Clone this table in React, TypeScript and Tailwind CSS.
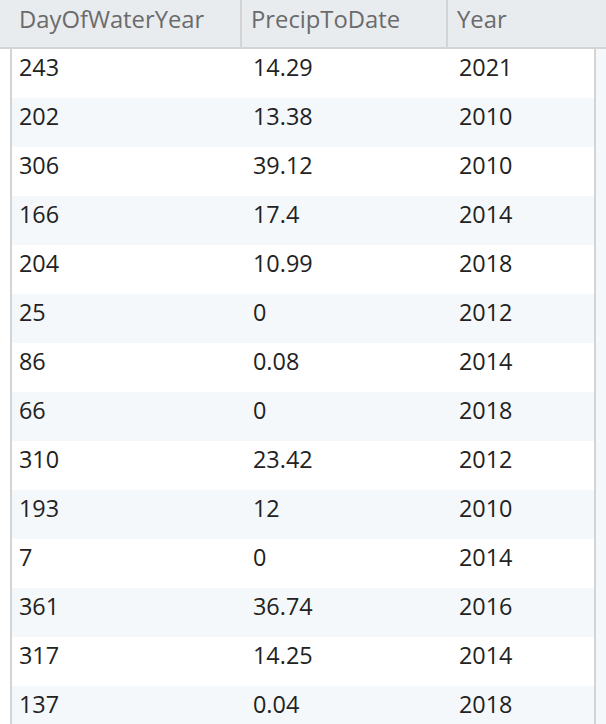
const rows: [string, string, string][] = [
  ['243', '14.29', '2021'],
  ['202', '13.38', '2010'],
  ['306', '39.12', '2010'],
  ['166', '17.4', '2014'],
  ['204', '10.99', '2018'],
  ['25', '0', '2012'],
  ['86', '0.08', '2014'],
  ['66', '0', '2018'],
  ['310', '23.42', '2012'],
  ['193', '12', '2010'],
  ['7', '0', '2014'],
  ['361', '36.74', '2016'],
  ['317', '14.25', '2014'],
  ['137', '0.04', '2018'],
];

export default function App() {
  return (
    <div
      className="w-[606px] h-[724px] overflow-hidden bg-[#f5f8fb]"
      style={{ fontFamily: '"Open Sans", "Noto Sans", sans-serif' }}
    >
      {/* header */}
      <div className="flex h-[49px] bg-[#e9ecef] border-b-2 border-[#d4d4d4] text-[23.8px] leading-[28px] text-[#6b6b6b]">
        <div className="w-[242px] pl-[19px] pt-[5px] border-r-2 border-[#d4d4d4]">DayOfWaterYear</div>
        <div className="w-[206px] pl-[9px] pt-[5px] border-r-2 border-[#d4d4d4]">PrecipToDate</div>
        <div className="flex-1 pl-[9px] pt-[5px]">Year</div>
      </div>

      {/* body */}
      <div className="flex">
        <div className="w-[10px] bg-white self-stretch" />
        <div className="w-[586px] border-l-2 border-r-2 border-[#d4d4d4] text-[23.4px] leading-[28px] text-[#222]">
          {rows.map((r, i) => (
            <div
              key={i}
              className={`flex h-[49px] pt-[4px] ${i % 2 === 0 ? 'bg-white' : 'bg-[#f5f8fb]'}`}
            >
              <div className="w-[232px] pl-[7px]">{r[0]}</div>
              <div className="w-[206px] pl-[9px]">{r[1]}</div>
              <div className="flex-1 pl-[9px]">{r[2]}</div>
            </div>
          ))}
        </div>
      </div>
    </div>
  );
}
